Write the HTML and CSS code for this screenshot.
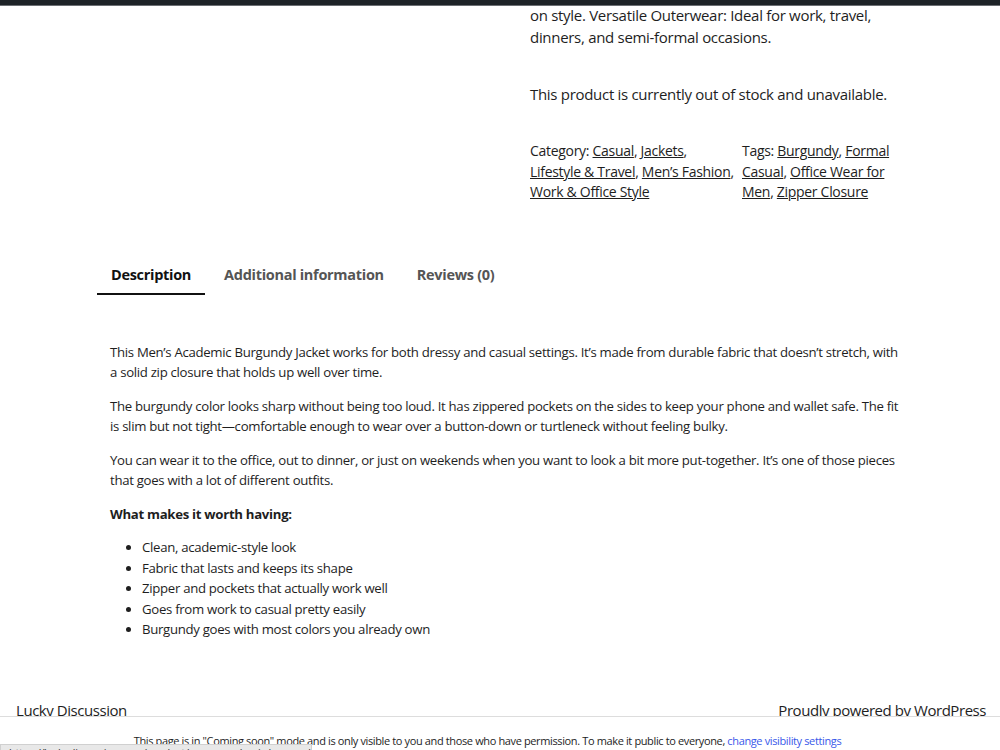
FILE: index.html
```html
<!DOCTYPE html>
<html lang="en">

<head>
  <meta charset="UTF-8">
  <meta name="viewport" content="width=device-width, initial-scale=1.0">
  <title>Men's Academic Burgundy Jacket – Lucky Discussion</title>
  <link rel="stylesheet" href="styles.css">
</head>

<body>
  <div class="admin-bar"></div>

  <main class="site-main">
    <!-- Resumo do produto (coluna direita) -->
    <div class="product-top">
      <div class="product-gallery"></div>
      <div class="summary">
        <p class="short-desc">on style. Versatile Outerwear: Ideal for work, travel, dinners, and semi-formal occasions.</p>
        <p class="stock">This product is currently out of stock and unavailable.</p>

        <div class="product-meta">
          <span class="meta-col cat">Category: <a href="#">Casual</a>, <a href="#">Jackets</a>, <a href="#">Lifestyle &amp; Travel</a>, <a href="#">Men’s Fashion</a>, <a href="#">Work &amp; Office Style</a></span>
          <span class="meta-col tags">Tags: <a href="#">Burgundy</a>, <a href="#">Formal Casual</a>, <a href="#">Office Wear for Men</a>, <a href="#">Zipper Closure</a></span>
        </div>
      </div>
    </div>

    <!-- Abas -->
    <div class="tabs-wrap">
      <ul class="tabs">
        <li class="tab active">Description</li>
        <li class="tab">Additional information</li>
        <li class="tab">Reviews (0)</li>
      </ul>

      <div class="tab-panel">
        <p>This Men’s Academic Burgundy Jacket works for both dressy and casual settings. It’s made from durable fabric that doesn’t stretch, with a solid zip closure that holds up well over time.</p>
        <p>The burgundy color looks sharp without being too loud. It has zippered pockets on the sides to keep your phone and wallet safe. The fit is slim but not tight—comfortable enough to wear over a button-down or turtleneck without feeling bulky.</p>
        <p>You can wear it to the office, out to dinner, or just on weekends when you want to look a bit more put-together. It’s one of those pieces that goes with a lot of different outfits.</p>
        <p><strong>What makes it worth having:</strong></p>
        <ul class="features">
          <li>Clean, academic-style look</li>
          <li>Fabric that lasts and keeps its shape</li>
          <li>Zipper and pockets that actually work well</li>
          <li>Goes from work to casual pretty easily</li>
          <li>Burgundy goes with most colors you already own</li>
        </ul>
      </div>
    </div>
  </main>

  <footer class="site-footer">
    <span>Lucky Discussion</span>
    <span>Proudly powered by WordPress</span>
  </footer>

  <div class="coming-soon">
    This page is in "Coming soon" mode and is only visible to you and those who have permission. To make it public to everyone, <a href="#">change visibility settings</a>
  </div>

  <div class="status-bar">https://luckydiscussion.com/product/mens-academic-burgundy-jacket/</div>
</body>

</html>
```

FILE: styles.css
```css
body {
  margin: 0;
  padding: 0;
  background-color: #fff;
  color: #1e1e1e;
  font-family: "Open Sans", sans-serif;
  font-size: 14px;
  letter-spacing: -0.3px;
}

a {
  color: #1e1e1e;
}

.admin-bar {
  position: fixed;
  top: 0;
  left: 0;
  right: 0;
  height: 5px;
  background-color: #1d2327;
  border-bottom: 1px solid #6b6f73;
  z-index: 10;
}

.site-main {
  padding-top: 4px;
}

.product-top {
  display: flex;
}

.product-gallery {
  width: 530px;
}

.summary {
  width: 360px;
  font-size: 15px;
  line-height: 22px;
}

.summary p {
  margin: 0;
}

.short-desc {
  margin-bottom: 35px !important;
}

.stock {
  margin-bottom: 36px !important;
}

.product-meta {
  display: flex;
  gap: 6px;
  font-size: 14px;
  line-height: 20.5px;
}

.meta-col.cat {
  width: 206px;
}

.meta-col.tags {
  flex: 1;
}

.tabs-wrap {
  width: 820px;
  margin: 52px auto 0 97px;
}

.tabs {
  display: flex;
  list-style: none;
  margin: 0;
  padding: 0;
  gap: 5px;
}

.tab {
  padding: 10px 14px 9px;
  font-size: 14.5px;
  font-weight: bold;
  color: #555;
  border-bottom: 2px solid transparent;
}

.tab.active {
  color: #111;
  border-bottom-color: #111;
}

.tab-panel {
  padding: 47px 13px 0;
  font-size: 13.2px;
  line-height: 20.5px;
}

.tab-panel p {
  margin: 0 0 13px;
}

.features {
  margin: 0;
  padding-left: 32px;
}

.site-footer {
  display: flex;
  justify-content: space-between;
  padding: 60px 14px 0 16px;
  font-size: 15px;
  letter-spacing: -0.45px;
}

.coming-soon {
  position: fixed;
  left: 0;
  right: 0;
  bottom: 0;
  height: 34px;
  box-sizing: border-box;
  padding: 16px 25px 0 0;
  background-color: #fff;
  border-top: 1px solid #ddd;
  text-align: center;
  font-size: 11px;
  letter-spacing: -0.37px;
  color: #1e1e1e;
}

.coming-soon a {
  color: #3858e9;
  text-decoration: none;
}

.status-bar {
  position: fixed;
  left: 0;
  bottom: -10px;
  width: 302px;
  height: 14px;
  padding-left: 8px;
  background-color: #e8e8e8;
  border: 1px solid #d0d0d0;
  font-size: 11px;
  color: #333;
  white-space: nowrap;
  overflow: hidden;
  z-index: 20;
}
```
